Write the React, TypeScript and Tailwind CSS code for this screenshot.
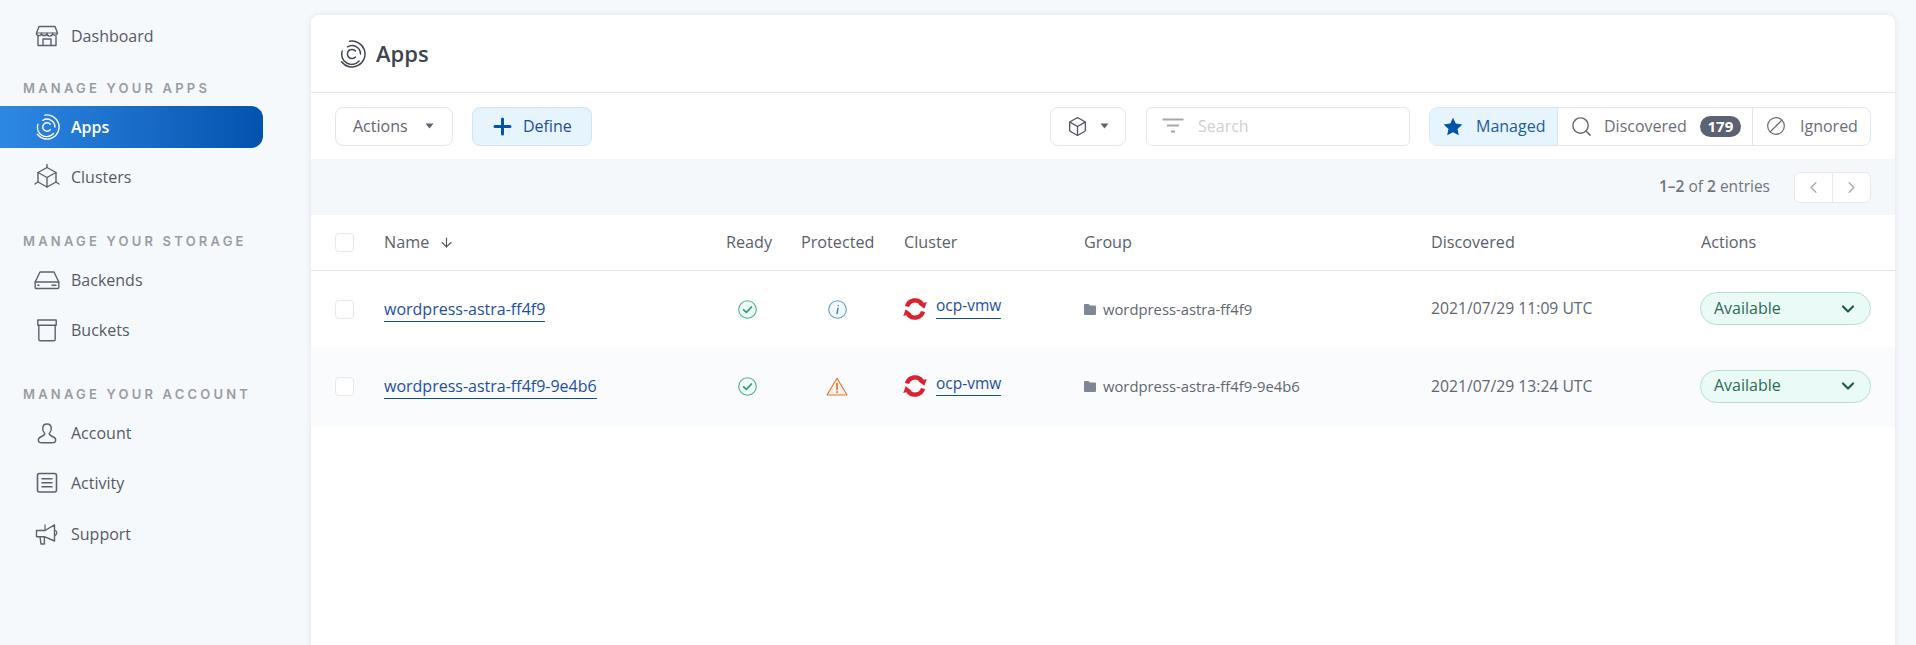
import React from "react";
import { ChevronLeft, ChevronRight, ChevronDown, Search, Ban, Box, ArrowDown } from "lucide-react";

const Spiral = ({ size, color }: { size: number; color: string }) => (
  <svg width={size} height={size} viewBox="0 0 28 28" fill="none" stroke={color} strokeWidth="1.45" strokeLinecap="round">
    <path d="M11.7 1.2A13 13 0 1 1 3.6 21.8" />
    <path d="M4.2 11A10 10 0 0 0 21.1 21" />
    <path d="M9.5 6.8A8.5 8.5 0 0 1 22.5 14" />
    <path d="M17.5 11A4.6 4.6 0 1 0 17.5 17" strokeWidth="1.5" />
  </svg>
);

const Caret = () => (
  <svg width="9" height="6" viewBox="0 0 9 6" className="shrink-0"><path d="M0.5 0.5H8.5L4.5 5.5Z" fill="#5f6470" /></svg>
);

const NavIcon = ({ name }: { name: string }) => {
  const c = { fill: "none", stroke: "#5d616e", strokeWidth: 1.4, strokeLinejoin: "round" as const, strokeLinecap: "round" as const };
  if (name === "store")
    return (
      <svg width="26" height="26" viewBox="0 0 26 26" {...c}>
        <path d="M5 3.5H21L23.5 10A2.5 2.5 0 0 1 18.6 10.3A2.8 2.8 0 0 1 13 10.3A2.8 2.8 0 0 1 7.5 10.3A2.5 2.5 0 0 1 2.5 10Z" />
        <path d="M2.5 10H23.5" strokeWidth="1" />
        <path d="M4 13V22.5H22V13M9 22.5V16H17V22.5" />
      </svg>
    );
  if (name === "cluster")
    return (
      <svg width="26" height="26" viewBox="0 0 26 26" {...c}>
        <path d="M13 3.5L22 8.5V18L13 23L4 18V8.5Z" />
        <path d="M4 8.5L13 13.5L22 8.5M13 13.5V23M13 0.5V3.5M1 20L4 18M25 20L22 18" />
      </svg>
    );
  if (name === "backend")
    return (
      <svg width="26" height="26" viewBox="0 0 26 26" {...c}>
        <path d="M6 5H20L24.8 15V20.5A1 1 0 0 1 23.8 21.5H2.2A1 1 0 0 1 1.2 20.5V15Z" />
        <path d="M1.2 15H24.8M3.8 18.3H5M18 18.3H22" />
      </svg>
    );
  if (name === "bucket")
    return (
      <svg width="26" height="26" viewBox="0 0 26 26" {...c}>
        <path d="M3.8 3H22.2V8.2H3.8Z" />
        <path d="M4.8 8.2V22.2A1.5 1.5 0 0 0 6.3 23.7H19.7A1.5 1.5 0 0 0 21.2 22.2V8.2" />
      </svg>
    );
  if (name === "account")
    return (
      <svg width="26" height="26" viewBox="0 0 26 26" {...c}>
        <path d="M13 4C10 4 8.7 6.2 8.7 8.6C8.7 11 9.8 12.6 10.8 13.6C10.8 15 9.8 15.6 7.6 16.5C5.5 17.3 4.3 18.5 4.3 20C4.3 22 6 22.8 8 22.8H18C20 22.8 21.7 22 21.7 20C21.7 18.5 20.5 17.3 18.4 16.5C16.2 15.6 15.2 15 15.2 13.6C16.2 12.6 17.3 11 17.3 8.6C17.3 6.2 16 4 13 4Z" />
      </svg>
    );
  if (name === "activity")
    return (
      <svg width="26" height="26" viewBox="0 0 26 26" {...c} strokeWidth={1.6}>
        <rect x="3.5" y="3.5" width="19" height="18.5" rx="2" />
        <path d="M8 8.7H18M8 12.7H18M8 16.8H18" />
      </svg>
    );
  return (
    <svg width="26" height="26" viewBox="0 0 26 26" {...c}>
      <path d="M2.5 9.5H11L20.5 3.8V20L11 15.8H2.5Z" />
      <path d="M20.5 9C22.2 9.6 22.8 10.6 22.8 11.8C22.8 13 22.2 14 20.5 14.6M11 3.8V9.5" strokeWidth="1.2" />
      <path d="M6 15.8L7 23H10.4V16" />
    </svg>
  );
};

const NavItem = ({ label, icon, className = "" }: { label: string; icon: string; className?: string }) => (
  <div className={`flex h-[42px] items-center pl-[34px] gap-[11px] text-[16px] text-[#565a67] ${className}`}>
    <NavIcon name={icon} />
    <span>{label}</span>
  </div>
);

const NavHeading = ({ label, className = "" }: { label: string; className?: string }) => (
  <div className={`pl-[23px] h-[18px] leading-[18px] text-[13px] font-semibold tracking-[3.2px] text-[#9a9ca3] font-['Inter',sans-serif] whitespace-nowrap ${className}`}>
    {label}
  </div>
);

const Sidebar = () => (
  <aside className="w-[311px] shrink-0 pt-[15px]">
    <NavItem label="Dashboard" icon="store" />
    <NavHeading label="MANAGE YOUR APPS" className="mt-[22px]" />
    <div className="mt-[9px] mr-[48px] flex h-[42px] items-center gap-[11px] rounded-r-[12px] bg-gradient-to-r from-[#2d88e4] to-[#0353ad] pl-[34px] text-[16px] font-semibold text-white">
      <Spiral size={26} color="#ffffff" />
      <span>Apps</span>
    </div>
    <NavItem label="Clusters" icon="cluster" className="mt-[8px]" />
    <NavHeading label="MANAGE YOUR STORAGE" className="mt-[34px]" />
    <NavItem label="Backends" icon="backend" className="mt-[9px]" />
    <NavItem label="Buckets" icon="bucket" className="mt-[8px]" />
    <NavHeading label="MANAGE YOUR ACCOUNT" className="mt-[34px]" />
    <NavItem label="Account" icon="account" className="mt-[9px]" />
    <NavItem label="Activity" icon="activity" className="mt-[8px]" />
    <NavItem label="Support" icon="support" className="mt-[9px]" />
  </aside>
);

const Toolbar = () => (
  <div className="flex h-[66px] items-center pl-[24px] pr-[24px] text-[16px]">
    <button className="flex h-[39px] w-[118px] items-center rounded-[8px] border border-[#e4e7ea] bg-white pl-[17px] text-[#62666f]">
      <span>Actions</span>
      <span className="ml-[17px]"><Caret /></span>
    </button>
    <button className="ml-[19px] flex h-[39px] w-[120px] items-center rounded-[8px] border border-[#cfe6f5] bg-[#e6f4fd] pl-[20px] text-[#1f4e96]">
      <svg width="19" height="19" viewBox="0 0 19 19" stroke="#0353ad" strokeWidth="3" strokeLinecap="round"><path d="M9.5 2V17M2 9.5H17" /></svg>
      <span className="ml-[11px]">Define</span>
    </button>
    <button className="ml-auto flex h-[39px] w-[76px] items-center rounded-[8px] border border-[#e4e7ea] bg-white pl-[16px]">
      <Box size={21} strokeWidth={1.5} color="#50545f" />
      <span className="ml-[12px]"><Caret /></span>
    </button>
    <div className="ml-[20px] flex h-[39px] w-[264px] items-center rounded-[6px] border border-[#e4e7ea] bg-white pl-[15px]">
      <svg width="22" height="16" viewBox="0 0 22 16" stroke="#a5a7ad" strokeWidth="2"><path d="M0.5 1.5H21.5M5 7.5H17M9 13.5H13" /></svg>
      <span className="ml-[14px] text-[#cdcfd3]">Search</span>
    </div>
    <div className="ml-[19px] flex h-[39px] w-[442px] overflow-hidden rounded-[8px] border border-[#e4e7ea] bg-white text-[#6a6e78]">
      <div className="flex w-[128px] items-center border-r border-[#dbe8f2] bg-[#e6f4fd] pl-[13px] text-[#1f5aa4]">
        <svg width="20" height="19" viewBox="0 0 24 23" fill="#0353ad"><path d="M12 0.8L15.4 8L23.3 9L17.5 14.4L19 22.2L12 18.4L5 22.2L6.5 14.4L0.7 9L8.6 8Z" /></svg>
        <span className="ml-[13px]">Managed</span>
      </div>
      <div className="flex w-[195px] items-center border-r border-[#e4e7ea] pl-[12px]">
        <Search size={23} strokeWidth={1.5} color="#666a74" />
        <span className="ml-[11px]">Discovered</span>
        <span className="ml-[13px] flex h-[21px] w-[41px] items-center justify-center rounded-full bg-[#5c6272] text-[15px] font-bold text-white">179</span>
      </div>
      <div className="flex flex-1 items-center pl-[13px]">
        <Ban size={20} strokeWidth={1.5} color="#666a74" className="-scale-x-100" />
        <span className="ml-[14px]">Ignored</span>
      </div>
    </div>
  </div>
);

const Pagination = () => (
  <div className="flex h-[56px] items-center justify-end bg-[#f5f8fb] pr-[24px] text-[15.5px] text-[#71757e]">
    <span><b className="font-semibold">1–2</b> of <b className="font-semibold">2</b> entries</span>
    <div className="ml-[24px] flex h-[31px] w-[77px] rounded-[6px] border border-[#e6e8eb] bg-white">
      <div className="flex flex-1 items-center justify-center border-r border-[#e6e8eb]"><ChevronLeft size={19} color="#a8abb1" strokeWidth={1.8} /></div>
      <div className="flex flex-1 items-center justify-center"><ChevronRight size={19} color="#a8abb1" strokeWidth={1.8} /></div>
    </div>
  </div>
);

const cols = "grid grid-cols-[73px_342px_75px_103px_180px_347px_270px_1fr] items-center";

const Checkbox = () => <div className="ml-[24px] h-[19px] w-[19px] rounded-[4px] border border-[#e6e8eb] bg-white" />;

const Head = () => (
  <div className={`${cols} h-[56px] border-b border-[#e2e4e7] text-[16.2px] font-medium text-[#5b5f6a]`}>
    <Checkbox />
    <div className="flex items-center gap-[10px]">Name <ArrowDown size={15} strokeWidth={1.8} color="#50545f" /></div>
    <div>Ready</div>
    <div>Protected</div>
    <div>Cluster</div>
    <div>Group</div>
    <div>Discovered</div>
    <div>Actions</div>
  </div>
);

const CheckIcon = () => (
  <svg width="19" height="19" viewBox="0 0 19 19" fill="none" className="ml-[12px]">
    <circle cx="9.5" cy="9.5" r="8.8" fill="#eefaf5" stroke="#4fae8d" strokeWidth="1.1" />
    <path d="M5.6 9.8L8.4 12.4L13.4 7" stroke="#2f9e78" strokeWidth="1.7" strokeLinecap="round" strokeLinejoin="round" />
  </svg>
);

const InfoIcon = () => (
  <svg width="19" height="19" viewBox="0 0 19 19" fill="none" className="ml-[27px]">
    <circle cx="9.5" cy="9.5" r="8.8" fill="#f3f9fd" stroke="#5a9fd0" strokeWidth="1.1" />
    <path d="M10 8.2L9.1 13.4M10.3 5.4V5.6" stroke="#3f85b8" strokeWidth="1.5" strokeLinecap="round" />
  </svg>
);

const WarnIcon = () => (
  <svg width="22" height="19" viewBox="0 0 22 19" fill="none" className="ml-[25px]">
    <path d="M11 1.2L21 18H1Z" fill="#fdf3ea" stroke="#de7a32" strokeWidth="1.2" strokeLinejoin="round" />
    <path d="M11 6.5V12.6M11 14.8V15.4" stroke="#d9692a" strokeWidth="1.6" strokeLinecap="round" />
  </svg>
);

const OpenShift = () => (
  <svg width="24" height="24" viewBox="0 0 24 24" fill="none" className="-ml-[1px] shrink-0 -mt-[1px]">
    <path d="M4 9.5A8.4 8.4 0 0 1 19 7" stroke="#d8232f" strokeWidth="4.4" />
    <path d="M20 14.5A8.4 8.4 0 0 1 5 17" stroke="#d8232f" strokeWidth="4.4" />
    <path d="M23.8 5L21.3 11.8L15.5 7.2Z" fill="#d8232f" />
    <path d="M0.2 19L2.7 12.2L8.5 16.8Z" fill="#d8232f" />
  </svg>
);

const Row = ({ name, warn, date, className = "" }: { name: string; warn?: boolean; date: string; className?: string }) => (
  <div className={`${cols} text-[15.7px] text-[#62666f] ${className}`}>
    <Checkbox />
    <div><span className="border-b border-[#0f4f9e] pb-[1px] text-[16px] text-[#1c4f9c]">{name}</span></div>
    <div className="flex"><CheckIcon /></div>
    <div className="flex">{warn ? <WarnIcon /> : <InfoIcon />}</div>
    <div className="flex items-center gap-[9px]">
      <OpenShift />
      <span className="-mt-[5px] border-b border-[#0f4f9e] text-[15.5px] text-[#1c4f9c]">ocp-vmw</span>
    </div>
    <div className="flex items-center gap-[7px] text-[14.8px] font-medium text-[#62666f]">
      <svg width="12" height="11" viewBox="0 0 12 11" fill="#7f8694"><path d="M0 1A1 1 0 0 1 1 0H4.5L6 1.5H11A1 1 0 0 1 12 2.5V10A1 1 0 0 1 11 11H1A1 1 0 0 1 0 10Z" /></svg>
      <span>{name}</span>
    </div>
    <div>{date}</div>
    <div className="-ml-[1px] mr-[24px] -mt-[1px] flex h-[33px] items-center justify-between rounded-full border border-[#b4e0d2] bg-[#eafaf6] pl-[13px] pr-[12px] text-[16px] leading-[22px] text-[#2f6a57]">
      <span className="-mt-[2px]">Available</span>
      <ChevronDown size={20} strokeWidth={2.6} color="#1f5c48" />
    </div>
  </div>
);

export default function App() {
  return (
    <div className="flex h-[645px] w-[1916px] overflow-hidden bg-[#f6f9fc] font-['Open_Sans',sans-serif]">
      <Sidebar />
      <main className="flex-1 pr-[21px] pt-[15px]">
        <section className="h-[700px] rounded-t-[8px] bg-white shadow-[0_0_6px_rgba(40,50,70,0.12)]">
          <header className="flex h-[78px] items-center gap-[10px] border-b border-[#e4e6e9] pl-[27px] text-[22px] font-semibold text-[#3f4450]">
            <Spiral size={28} color="#3f4450" />
            <span>Apps</span>
          </header>
          <Toolbar />
          <Pagination />
          <Head />
          <Row name="wordpress-astra-ff4f9" date="2021/07/29 11:09 UTC" className="h-[76px]" />
          <Row name="wordpress-astra-ff4f9-9e4b6" warn date="2021/07/29 13:24 UTC" className="h-[80px] pb-[1px] bg-[#fafbfd]" />
        </section>
      </main>
    </div>
  );
}
